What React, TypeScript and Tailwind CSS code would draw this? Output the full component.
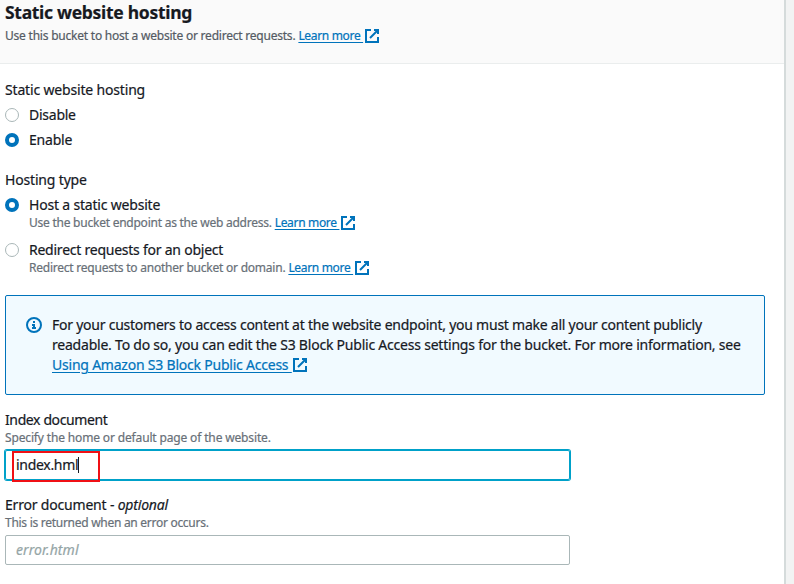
import type { ReactNode } from "react";

function ExternalIcon() {
  return (
    <svg viewBox="0 0 16 16" className="ml-[0.5px] inline-block size-4 shrink-0" fill="none" stroke="currentColor" strokeWidth="2">
      <path d="M10 2h4v4M6 10l8-8" />
      <path d="M14 9.048V14H2V2h5" />
    </svg>
  );
}

function Link({ children, className = "" }: { children: ReactNode; className?: string }) {
  return (
    <a href="#" className={"inline-flex items-center text-[#0073bb] " + className}>
      <span className="whitespace-pre underline underline-offset-2">{children}</span>
      <ExternalIcon />
    </a>
  );
}

function Radio({ checked = false }: { checked?: boolean }) {
  return checked ? (
    <span className="mt-[3px] size-3.5 shrink-0 rounded-full border-[4px] border-[#0073bb] bg-white" />
  ) : (
    <span className="mt-[3px] size-3.5 shrink-0 rounded-full border border-[#aab7b8] bg-white" />
  );
}

export default function App() {
  return (
    <div className="flex h-[584px] w-[794px] overflow-hidden bg-[#f2f3f3] font-['Noto_Sans',sans-serif] text-sm leading-5 whitespace-nowrap text-[#16191f] [-webkit-text-stroke:0.2px]">
      <main className="w-[786px] border-r-2 border-[#d5dbdb] bg-white">
        <header className="h-16 border-b border-[#eaeded] bg-[#fafafa] pl-[5px]">
          <h2 className="text-[17.5px] leading-6 font-bold tracking-[-0.3px]">Static website hosting</h2>
          <p className="mt-0.5 flex h-[19px] items-center gap-[3px] text-xs text-[#545b64]">
            <span className="tracking-[-0.22px]">Use this bucket to host a website or redirect requests.</span>
            <Link className="tracking-[-0.33px]">Learn more </Link>
          </p>
        </header>
        <div className="pt-4 pl-[5px]">
          <section>
            <div className="tracking-[-0.17px]">Static website hosting</div>
            <label className="mt-[5px] flex gap-2.5 tracking-[-0.25px]"><Radio />Disable</label>
            <label className="mt-[5px] flex gap-2.5 tracking-[-0.2px]"><Radio checked />Enable</label>
          </section>
          <section className="mt-5">
            <div className="tracking-[-0.17px]">Hosting type</div>
            <div className="mt-[5px] flex gap-2.5">
              <Radio checked />
              <div>
                <div className="tracking-[-0.19px]">Host a static website</div>
                <p className="flex h-4 items-center gap-[3px] text-xs text-[#687078]">
                  <span className="tracking-[-0.24px]">Use the bucket endpoint as the web address.</span>
                  <Link className="tracking-[-0.33px]">Learn more </Link>
                </p>
              </div>
            </div>
            <div className="mt-[9px] flex gap-2.5">
              <Radio />
              <div>
                <div className="tracking-[-0.24px]">Redirect requests for an object</div>
                <p className="flex h-4 items-center gap-[3px] text-xs text-[#687078]">
                  <span className="tracking-[-0.23px]">Redirect requests to another bucket or domain.</span>
                  <Link className="tracking-[-0.33px]">Learn more </Link>
                </p>
              </div>
            </div>
          </section>
          <section className="mt-[19px] flex h-[100px] w-[760px] gap-2.5 rounded-xs border border-[#0073bb] bg-[#f1faff] pt-[19px] pl-5">
            <svg viewBox="0 0 16 16" className="mt-0.5 size-4 shrink-0 text-[#0073bb]" fill="none" stroke="currentColor" strokeWidth="2">
              <circle cx="8" cy="8" r="7" />
              <path d="M8 11V8H6M10 11H6M8 6V4" />
            </svg>
            <div>
              <div className="tracking-[-0.243px]">For your customers to access content at the website endpoint, you must make all your content publicly</div>
              <div className="tracking-[-0.218px]">readable. To do so, you can edit the S3 Block Public Access settings for the bucket. For more information, see</div>
              <div className="flex"><Link className="tracking-[-0.22px]">Using Amazon S3 Block Public Access </Link></div>
            </div>
          </section>
          <section className="mt-[15px]">
            <div className="tracking-[-0.38px]">Index document</div>
            <p className="h-4 text-xs leading-4 tracking-[-0.15px] text-[#687078]">Specify the home or default page of the website.</p>
            <div className="relative mt-1 flex h-[30px] w-[565px] items-center rounded-xs border border-[#00a1c9] pl-2.5 ring ring-[#00a1c9]">
              <span className="tracking-[-0.3px]">index.hml</span>
              <span className="h-4 w-px bg-[#16191f]" />
              <span className="absolute top-0 left-[6px] h-[31px] w-[88px] border-2 border-[#f01015]" />
            </div>
          </section>
          <section className="mt-[15px]">
            <div className="tracking-[-0.19px]">Error document - <i>optional</i></div>
            <p className="h-4 text-xs leading-4 tracking-[-0.28px] text-[#687078]">This is returned when an error occurs.</p>
            <div className="mt-1 flex h-[30px] w-[565px] items-center rounded-xs border border-[#aab7b8] pl-2.5 tracking-[0.08px] text-[#95a5a6] italic">error.html</div>
          </section>
        </div>
      </main>
    </div>
  );
}
